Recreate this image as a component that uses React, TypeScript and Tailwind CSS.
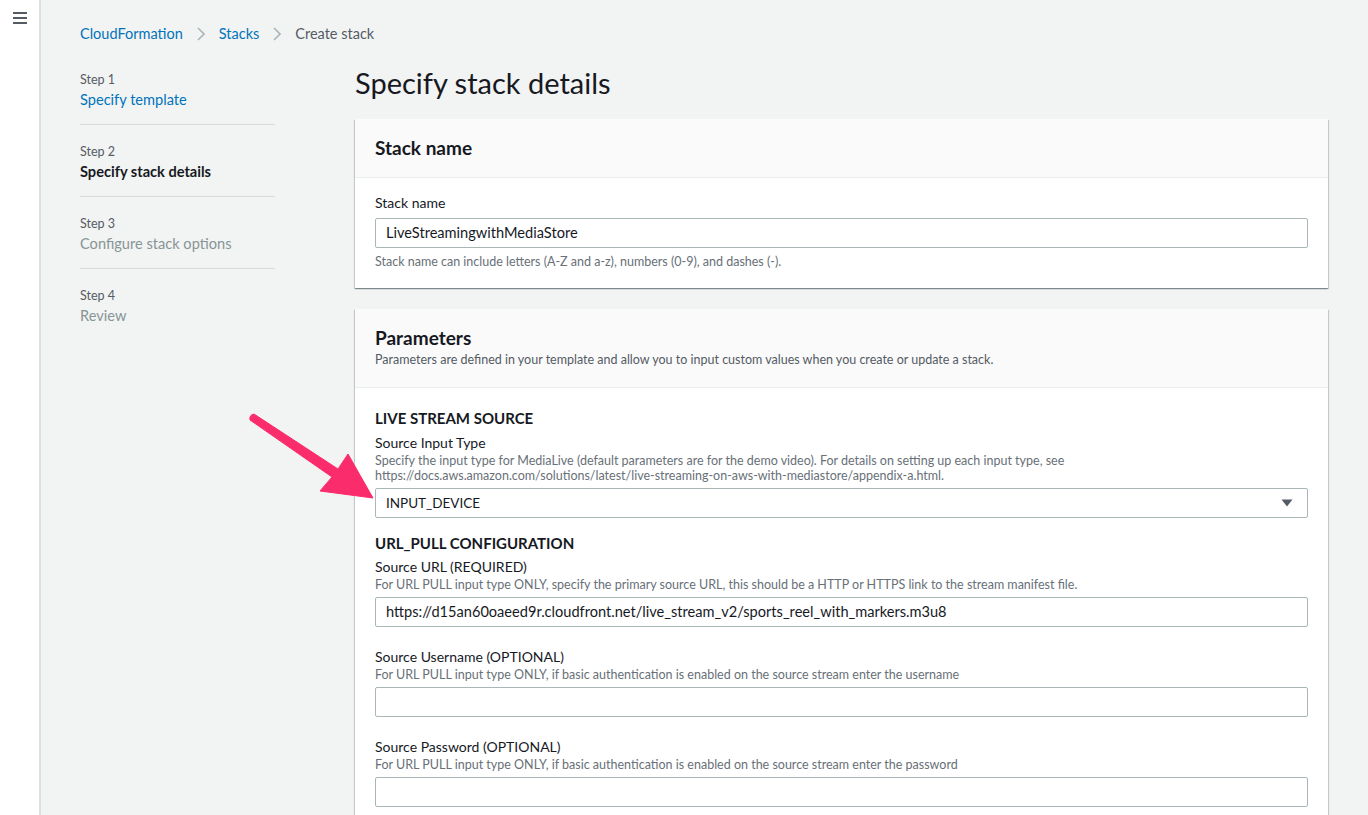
import React from "react";

const font = { fontFamily: "Lato, 'Liberation Sans', sans-serif" };

function Step({ n, title, state }: { n: number; title: string; state: "done" | "current" | "todo" }) {
  return (
    <div className="flex flex-col">
      <span className="text-[12.5px] leading-[16px] text-[#545b64]">Step {n}</span>
      <span
        className={[
          "mt-[2px] text-[14.6px] leading-[20px]",
          state === "done" ? "text-[#0073bb]" : state === "current" ? "font-bold text-[#16191f]" : "text-[#879596]",
        ].join(" ")}
      >
        {title}
      </span>
    </div>
  );
}

function Field({
  label,
  hint,
  value,
  select,
}: {
  label: string;
  hint?: React.ReactNode;
  value?: string;
  select?: boolean;
}) {
  return (
    <div className="flex flex-col">
      <span className="text-[14px] leading-[20px] text-[#16191f]">{label}</span>
      {hint && <p className="text-[12.5px] leading-[15px] text-[#687078]">{hint}</p>}
      <div className="mt-[5px] flex h-[30px] items-center justify-between rounded-[2px] border border-[#aab7b8] bg-white pl-[10px] pr-[14px]">
        <span className={select ? "text-[13.5px] text-[#16191f]" : "text-[14.6px] text-[#16191f]"}>{value}</span>
        {select && (
          <svg width="12" height="8" viewBox="0 0 12 8">
            <path d="M0.5 0.5 H11.5 L6 7.5 Z" fill="#545b64" />
          </svg>
        )}
      </div>
    </div>
  );
}

const cardShadow =
  "bg-white shadow-[0_1px_1px_rgba(0,28,36,0.3),1px_1px_1px_rgba(0,28,36,0.15),-1px_1px_1px_rgba(0,28,36,0.15)]";

export default function App() {
  return (
    <div style={font} className="relative flex h-[815px] w-full overflow-hidden bg-[#f2f3f3]">
      <div className="w-[41px] shrink-0 border-r-2 border-[#dcdfe0] bg-white">
        <div className="ml-[13px] mt-[12px] flex w-[14px] flex-col gap-[3px]">
          <span className="h-[2px] bg-[#545b64]" />
          <span className="h-[2px] bg-[#545b64]" />
          <span className="h-[2px] bg-[#545b64]" />
        </div>
      </div>

      <div className="flex-1 pl-[39px] pr-[40px]">
        <nav className="mt-[24px] flex items-center gap-[14px] text-[14.5px] leading-[20px]">
          <span className="text-[#0073bb]">CloudFormation</span>
          <svg width="8" height="14" viewBox="0 0 8 14">
            <path d="M1 1 L7 7 L1 13" stroke="#aab7b8" strokeWidth="1.6" fill="none" />
          </svg>
          <span className="text-[#0073bb]">Stacks</span>
          <svg width="8" height="14" viewBox="0 0 8 14">
            <path d="M1 1 L7 7 L1 13" stroke="#aab7b8" strokeWidth="1.6" fill="none" />
          </svg>
          <span className="text-[#545b64]">Create stack</span>
        </nav>

        <div className="mt-[11px] flex">
          <div className="w-[195px] shrink-0 pt-[17px]">
            <Step n={1} title="Specify template" state="done" />
            <div className="mb-[19px] mt-[14px] h-px bg-[#d5dbdb]" />
            <Step n={2} title="Specify stack details" state="current" />
            <div className="mb-[19px] mt-[14px] h-px bg-[#d5dbdb]" />
            <Step n={3} title="Configure stack options" state="todo" />
            <div className="mb-[19px] mt-[14px] h-px bg-[#d5dbdb]" />
            <Step n={4} title="Review" state="todo" />
          </div>

          <div className="ml-[80px] flex-1">
            <h1 className="pt-[9px] text-[29px] leading-[38px] text-[#16191f]">Specify stack details</h1>

            <section className={`mt-[17px] ${cardShadow}`}>
              <div className="h-[59px] border-b border-[#eaeded] bg-[#fafafa] px-[20px] pt-[17px]">
                <h2 className="text-[19px] font-bold leading-[24px] text-[#16191f]">Stack name</h2>
              </div>
              <div className="px-[20px] pb-[19px] pt-[12px]">
                <span className="text-[14px] leading-[20px] text-[#16191f]">Stack name</span>
                <div className="mt-[4px] flex h-[30px] items-center rounded-[2px] border border-[#aab7b8] bg-white pl-[10px]">
                  <span className="text-[14.6px] text-[#16191f]">LiveStreamingwithMediaStore</span>
                </div>
                <p className="mt-[6px] text-[12.5px] leading-[15px] text-[#687078]">
                  Stack name can include letters (A-Z and a-z), numbers (0-9), and dashes (-).
                </p>
              </div>
            </section>

            <section className={`mt-[21px] ${cardShadow}`}>
              <div className="h-[79px] border-b border-[#eaeded] bg-[#fafafa] px-[20px] pt-[17px]">
                <h2 className="text-[19px] font-bold leading-[24px] text-[#16191f]">Parameters</h2>
                <p className="mt-[2px] text-[12.5px] leading-[15px] text-[#545b64]">
                  Parameters are defined in your template and allow you to input custom values when you create or update a stack.
                </p>
              </div>
              <div className="flex flex-col px-[20px] pb-[20px] pt-[20px]">
                <h3 className="text-[15px] font-bold leading-[20px] text-[#16191f]">LIVE STREAM SOURCE</h3>
                <div className="mt-[5px]">
                  <Field
                    label="Source Input Type"
                    hint={
                      <>
                        Specify the input type for MediaLive (default parameters are for the demo video). For details on setting up
                        each input type, see
                        <br />
                        https://docs.aws.amazon.com/solutions/latest/live-streaming-on-aws-with-mediastore/appendix-a.html.
                      </>
                    }
                    value="INPUT_DEVICE"
                    select
                  />
                </div>
                <h3 className="mt-[15px] text-[15px] font-bold leading-[20px] text-[#16191f]">URL_PULL CONFIGURATION</h3>
                <div className="mt-[4px]">
                  <Field
                    label="Source URL (REQUIRED)"
                    hint="For URL PULL input type ONLY, specify the primary source URL, this should be a HTTP or HTTPS link to the stream manifest file."
                    value="https://d15an60oaeed9r.cloudfront.net/live_stream_v2/sports_reel_with_markers.m3u8"
                  />
                </div>
                <div className="mt-[20px]">
                  <Field
                    label="Source Username (OPTIONAL)"
                    hint="For URL PULL input type ONLY, if basic authentication is enabled on the source stream enter the username"
                  />
                </div>
                <div className="mt-[20px]">
                  <Field
                    label="Source Password (OPTIONAL)"
                    hint="For URL PULL input type ONLY, if basic authentication is enabled on the source stream enter the password"
                  />
                </div>
              </div>
            </section>
          </div>
        </div>
      </div>

      <svg className="pointer-events-none absolute left-0 top-0" width="1368" height="815">
        <path
          d="M250 420 L332 477 L320 491 L373 498 L348 454 L338 469 L254 414 Q249 415 250 420 Z"
          fill="#fb2c6c"
          stroke="#fb2c6c"
          strokeWidth="1"
          strokeLinejoin="round"
        />
      </svg>
    </div>
  );
}
